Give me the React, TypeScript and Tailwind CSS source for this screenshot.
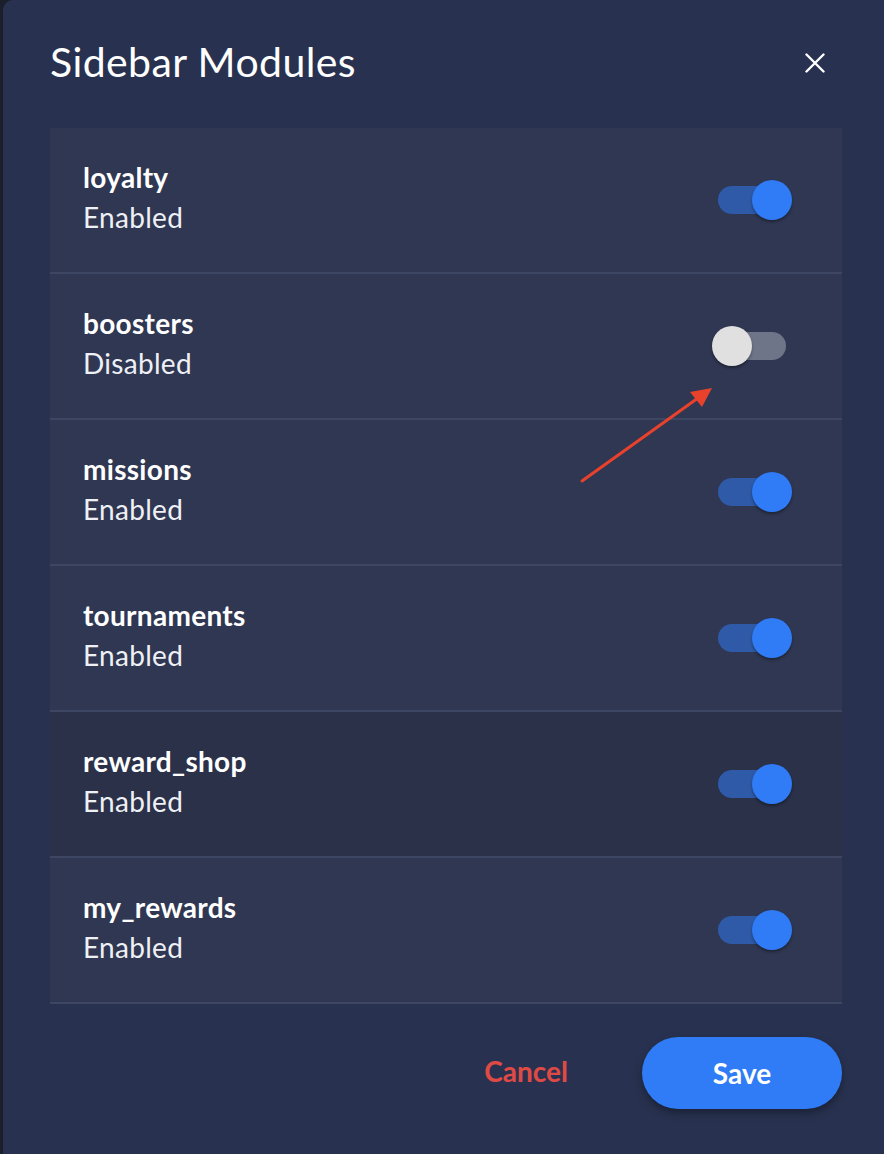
import React, { useState } from 'react';

type Module = { key: string; enabled: boolean };

const initialModules: Module[] = [
  { key: 'loyalty', enabled: true },
  { key: 'boosters', enabled: false },
  { key: 'missions', enabled: true },
  { key: 'tournaments', enabled: true },
  { key: 'reward_shop', enabled: true },
  { key: 'my_rewards', enabled: true },
];

const Toggle: React.FC<{ on: boolean; onClick: () => void }> = ({ on, onClick }) => (
  <button
    type="button"
    onClick={onClick}
    className="relative w-[80px] h-[40px] shrink-0"
    aria-pressed={on}
  >
    <span
      className={`absolute left-[6px] top-[6px] w-[68px] h-[28px] rounded-full ${
        on ? 'bg-[#2f5aa8]' : 'bg-[#6f7589]'
      }`}
    />
    <span
      className={`absolute top-0 w-[40px] h-[40px] rounded-full shadow-[0_2px_3px_rgba(0,0,0,0.35)] ${
        on ? 'left-[40px] bg-[#2f7cf6]' : 'left-0 bg-[#e0e0e0]'
      }`}
    />
  </button>
);

const App: React.FC = () => {
  const [modules, setModules] = useState(initialModules);

  const toggle = (key: string) =>
    setModules((prev) => prev.map((m) => (m.key === key ? { ...m, enabled: !m.enabled } : m)));

  return (
    <div
      className="relative w-full h-[1154px] bg-[#1b1f2c] flex pl-[3px] overflow-hidden"
      style={{ fontFamily: 'Lato, "Noto Sans", sans-serif' }}
    >
      <div className="flex-1 bg-[#283250] rounded-tl-[10px] pl-[47px] pr-[42px] flex flex-col">
        <div className="flex items-center justify-between h-[128px] pb-[4px]">
          <h2 className="text-[41px] leading-[48px] text-white font-normal tracking-[0.4px]">Sidebar Modules</h2>
          <button type="button" className="mr-[17px] mt-[2px] text-white" aria-label="Close">
            <svg width="20" height="20" viewBox="0 0 20 20" fill="none" stroke="currentColor" strokeWidth="2.4" strokeLinecap="round">
              <path d="M1.5 1.5L18.5 18.5M18.5 1.5L1.5 18.5" />
            </svg>
          </button>
        </div>

        <div className="flex flex-col">
          {modules.map((m) => (
            <div
              key={m.key}
              className={`h-[146px] border-b-2 border-[#3d4663] flex items-center justify-between pl-[33px] pr-[50px] ${
                m.key === 'reward_shop' ? 'bg-[#2a3149]' : 'bg-[#2f3752]'
              }`}
            >
              <div className="flex flex-col text-white text-[28px] leading-[40px] -mt-[7px] tracking-[0.3px]">
                <span className="font-bold">{m.key}</span>
                <span className="font-normal text-[#eef0f5]">{m.enabled ? 'Enabled' : 'Disabled'}</span>
              </div>
              <Toggle on={m.enabled} onClick={() => toggle(m.key)} />
            </div>
          ))}
        </div>

        <div className="flex items-center justify-end gap-[74px] mt-[33px]">
          <button type="button" className="text-[#e04a45] text-[28px] font-bold -mt-[4px]">
            Cancel
          </button>
          <button
            type="button"
            className="w-[200px] h-[72px] rounded-full bg-[#2f7cf6] text-white text-[28px] font-bold shadow-[0_4px_8px_rgba(0,0,0,0.35)]"
          >
            Save
          </button>
        </div>
      </div>

      <svg className="absolute inset-0 pointer-events-none" width="884" height="1154" viewBox="0 0 884 1154">
        <line x1="582" y1="481" x2="698" y2="398" stroke="#e8412c" strokeWidth="3" strokeLinecap="round" />
        <polygon points="712,388 690,392 702,407" fill="#e8412c" />
      </svg>
    </div>
  );
};

export default App;
